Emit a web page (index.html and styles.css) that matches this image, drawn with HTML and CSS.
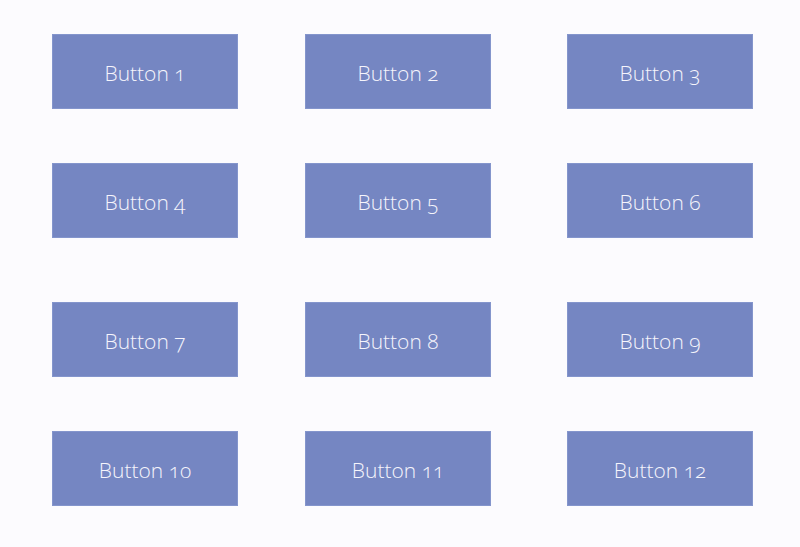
FILE: index.html
```html
<!DOCTYPE html>
<html>
<head>
<meta charset="utf-8">
<link rel="stylesheet" href="styles.css">
</head>
<body>
<div class="grid">
  <div class="btn">Button 1</div>
  <div class="btn">Button 2</div>
  <div class="btn">Button 3</div>
  <div class="btn">Button 4</div>
  <div class="btn">Button 5</div>
  <div class="btn">Button 6</div>
  <div class="btn">Button 7</div>
  <div class="btn">Button 8</div>
  <div class="btn">Button 9</div>
  <div class="btn">Button 10</div>
  <div class="btn">Button 11</div>
  <div class="btn">Button 12</div>
</div>
</body>
</html>
```
FILE: styles.css
```css
html, body {
  margin: 0;
  padding: 0;
  background: #fcfbfe;
  width: 800px;
  height: 547px;
  overflow: hidden;
}
.grid {
  display: grid;
  grid-template-columns: 253px 262px 186px;
  grid-template-rows: 129px 139px 129px 75px;
  padding: 34px 0 0 52px;
  align-items: start;
  justify-items: start;
}
.btn {
  box-sizing: border-box;
  width: 186px;
  height: 75px;
  background: #7586c2;
  border: 1px solid #8495cc;
  color: #f6f5fc;
  font-family: "Open Sans", "Lato", sans-serif;
  font-weight: 350;
  font-size: 21px;
  font-variant-numeric: oldstyle-nums;
  display: flex;
  align-items: center;
  justify-content: center;
  padding-top: 2px;
}
```
